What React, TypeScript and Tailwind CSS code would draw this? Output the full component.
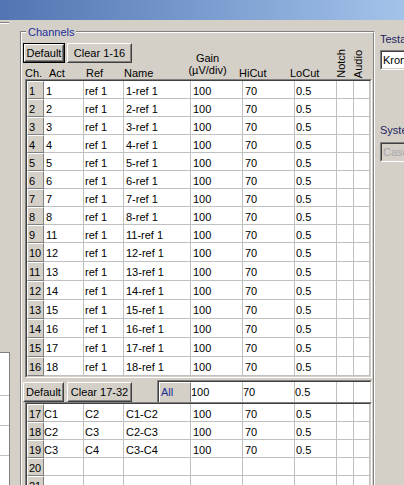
import React from "react";

type R = { n: string; act: string; ref: string; name: string; gain: string; hi: string; lo: string };

const topRows: R[] = Array.from({ length: 16 }, (_, i) => {
  const a = i < 8 ? i + 1 : i + 3;
  return { n: String(i + 1), act: String(a), ref: "ref 1", name: `${a}-ref 1`, gain: "100", hi: "70", lo: "0.5" };
});

const botRows: R[] = [
  { n: "17", act: "C1", ref: "C2", name: "C1-C2", gain: "100", hi: "70", lo: "0.5" },
  { n: "18", act: "C2", ref: "C3", name: "C2-C3", gain: "100", hi: "70", lo: "0.5" },
  { n: "19", act: "C3", ref: "C4", name: "C3-C4", gain: "100", hi: "70", lo: "0.5" },
  { n: "20", act: "", ref: "", name: "", gain: "", hi: "", lo: "" },
  { n: "21", act: "", ref: "", name: "", gain: "", hi: "", lo: "" },
];

function Cell({ w, pl = "pl-[2px]", lead, children }: { w: string; pl?: string; lead: string; children?: React.ReactNode }) {
  return (
    <div className={`${w} shrink-0 h-full bg-white border-r border-b border-[#c0c0c0] ${pl} pt-[2px] ${lead} whitespace-nowrap overflow-hidden`}>
      {children}
    </div>
  );
}

function GridRow({ r, tall, actPl }: { r: R; tall?: boolean; actPl?: string }) {
  const h = tall ? "h-[19px]" : "h-[18px]";
  const lead = tall ? "leading-[17px]" : "leading-[16px]";
  const hlead = tall ? "leading-[17px]" : "leading-[16px]";
  return (
    <div className={`flex ${h}`}>
      <div className={`w-[17px] shrink-0 h-full bg-[#d4d0c8] border border-t-white border-l-white border-r-[#808080] border-b-[#808080] pl-[1px] pt-[1px] ${hlead}`}>
        {r.n}
      </div>
      <Cell w="w-[40px]" pl={actPl ?? "pl-[2px]"} lead={lead}>{r.act}</Cell>
      <Cell w="w-[40px]" pl="pl-[1px]" lead={lead}>{r.ref}</Cell>
      <Cell w="w-[67px]" lead={lead}>{r.name}</Cell>
      <Cell w="w-[52px]" lead={lead}>{r.gain}</Cell>
      <Cell w="w-[52px]" lead={lead}>{r.hi}</Cell>
      <Cell w="w-[42px]" pl="pl-[1px]" lead={lead}>{r.lo}</Cell>
      <Cell w="w-[17px]" lead={lead} />
      <Cell w="w-[16px]" lead={lead} />
    </div>
  );
}

function Sunken({ children, cls = "", noBottom }: { children: React.ReactNode; cls?: string; noBottom?: boolean }) {
  return (
    <div className={`border border-t-[#808080] border-l-[#808080] border-r-white border-b-white ${noBottom ? "border-b-0" : ""} ${cls}`}>
      <div className={`h-full border border-t-[#404040] border-l-[#404040] border-r-[#d4d0c8] border-b-[#d4d0c8] ${noBottom ? "border-b-0" : ""}`}>
        {children}
      </div>
    </div>
  );
}

function Btn({ label, w, def }: { label: string; w: string; def?: boolean }) {
  const face = (
    <div className="h-full border border-t-white border-l-white border-r-[#404040] border-b-[#404040]">
      <div className="h-full flex items-center justify-center border border-t-[#d4d0c8] border-l-[#d4d0c8] border-r-[#808080] border-b-[#808080] leading-[11px] whitespace-nowrap">
        {label}
      </div>
    </div>
  );
  return (
    <div className={`${w} h-[20px] shrink-0 bg-[#d4d0c8] ${def ? "border border-black" : ""}`}>
      {face}
    </div>
  );
}

export default function App() {
  return (
    <div className="w-[404px] h-[485px] overflow-hidden bg-[#d4d0c8] font-['Liberation_Sans',Arial,sans-serif] text-[11px] text-black flex flex-col">
      <div className="h-[20px] shrink-0 bg-linear-to-r from-[#5274b2] to-[#a4c3ea]" />
      <div className="flex flex-1 min-h-0 overflow-hidden">
        {/* left strip */}
        <div className="w-[20px] shrink-0 flex flex-col">
          <div className="mt-[2px] h-[2px] w-[9px] border-t border-b border-t-[#808080] border-b-white" />
          <div className="flex-1" />
          <div className="h-[133px] w-[10px] bg-white border-t border-r border-[#808080] flex flex-col">
            <div className="h-[43px] border-b border-[#c0c0c0]" />
            <div className="h-[30px] border-b border-[#c0c0c0]" />
            <div className="h-[30px] border-b border-[#c0c0c0]" />
          </div>
        </div>

        {/* group box */}
        <div className="relative w-[355px] shrink-0 mt-[11px] h-[520px] border border-t-[#808080] border-l-[#808080] border-r-white border-b-white">
          <div className="h-full border border-t-white border-l-white border-r-[#808080] border-b-[#808080] flex flex-col">
            {/* header block */}
            <div className="mt-[10px] h-[36px] flex shrink-0">
              <div className="w-[166px] shrink-0 flex flex-col">
                <div className="flex pl-[1px] gap-[2px]">
                  <Btn label="Default" w="w-[42px]" def />
                  <Btn label="Clear 1-16" w="w-[65px]" />
                </div>
                <div className="mt-auto h-[11px] leading-[11px] flex pl-[3px] whitespace-nowrap">
                  <div className="w-[24px]">Ch.</div>
                  <div className="w-[37px]">Act</div>
                  <div className="w-[38px]">Ref</div>
                  <div>Name</div>
                </div>
              </div>
              <div className="w-[39px] shrink-0 self-end mb-[3px] text-center leading-[12px] whitespace-nowrap">
                <div>Gain</div>
                <div>(µV/div)</div>
              </div>
              <div className="w-[12px] shrink-0" />
              <div className="w-[51px] shrink-0 self-end leading-[11px]">HiCut</div>
              <div className="w-[46px] shrink-0 self-end leading-[11px]">LoCut</div>
              <div className="w-[17px] shrink-0 self-end mb-[1px] flex">
                <span className="[writing-mode:vertical-rl] rotate-180 leading-[11px] whitespace-nowrap">Notch</span>
              </div>
              <div className="w-[17px] shrink-0 self-end mb-[1px] flex">
                <span className="[writing-mode:vertical-rl] rotate-180 leading-[11px] whitespace-nowrap">Audio</span>
              </div>
            </div>

            {/* top grid */}
            <Sunken cls="ml-[3px] w-[347px] shrink-0">
              <div className="flex flex-col">
                {topRows.map((r, i) => (
                  <GridRow key={r.n} r={r} tall={i >= 9} />
                ))}
              </div>
            </Sunken>

            {/* middle controls */}
            <div className="h-[24px] shrink-0 flex items-end">
              <div className="ml-[1px] flex gap-[3px]">
                <Btn label="Default" w="w-[41px]" />
                <Btn label="Clear 17-32" w="w-[65px]" />
              </div>
              <Sunken cls="ml-[25px] w-[215px] h-[22px]" noBottom>
                <div className="flex h-[20px] bg-white">
                  <div className="w-[32px] shrink-0 h-full bg-[#d4d0c8] border-t border-l border-r border-t-white border-l-white border-r-[#808080] pl-[1px] leading-[19px] text-[#1c2f8f]">
                    All
                  </div>
                  <div className="w-[52px] shrink-0 h-full border-r border-[#c0c0c0] leading-[20px]">100</div>
                  <div className="w-[52px] shrink-0 h-full border-r border-[#c0c0c0] leading-[20px]">70</div>
                  <div className="w-[42px] shrink-0 h-full border-r border-[#c0c0c0] leading-[20px]">0.5</div>
                  <div className="w-[17px] shrink-0 h-full border-r border-[#c0c0c0]" />
                  <div className="w-[16px] shrink-0 h-full" />
                </div>
              </Sunken>
            </div>

            {/* bottom grid */}
            <Sunken cls="ml-[3px] w-[347px] shrink-0">
              <div className="flex flex-col">
                {botRows.map((r) => (
                  <GridRow key={r.n} r={r} actPl="pl-0" />
                ))}
              </div>
            </Sunken>
          </div>
          <div className="absolute -top-[5px] left-[5px] px-[2px] bg-[#d4d0c8] leading-[11px] text-[#1c2f9a] whitespace-nowrap">
            Channels
          </div>
        </div>

        {/* right panel */}
        <div className="flex-1 min-w-0 overflow-hidden pl-[5px] flex flex-col">
          <div className="mt-[14px] leading-[11px] whitespace-nowrap text-[#1e2460]">Testart:</div>
          <Sunken cls="mt-[5px] h-[20px] w-[80px] shrink-0">
            <div className="h-full bg-white pl-[1px] pt-[1px] leading-[15px] whitespace-nowrap">Kronos</div>
          </Sunken>
          <div className="mt-[55px] leading-[11px] whitespace-nowrap text-[#1e2460]">System:</div>
          <Sunken cls="mt-[6px] h-[20px] w-[80px] shrink-0">
            <div className="h-full bg-[#d4d0c8] pl-[1px] pt-[1px] leading-[15px] whitespace-nowrap text-[#a7a6aa]">Cascade</div>
          </Sunken>
        </div>
      </div>
    </div>
  );
}
